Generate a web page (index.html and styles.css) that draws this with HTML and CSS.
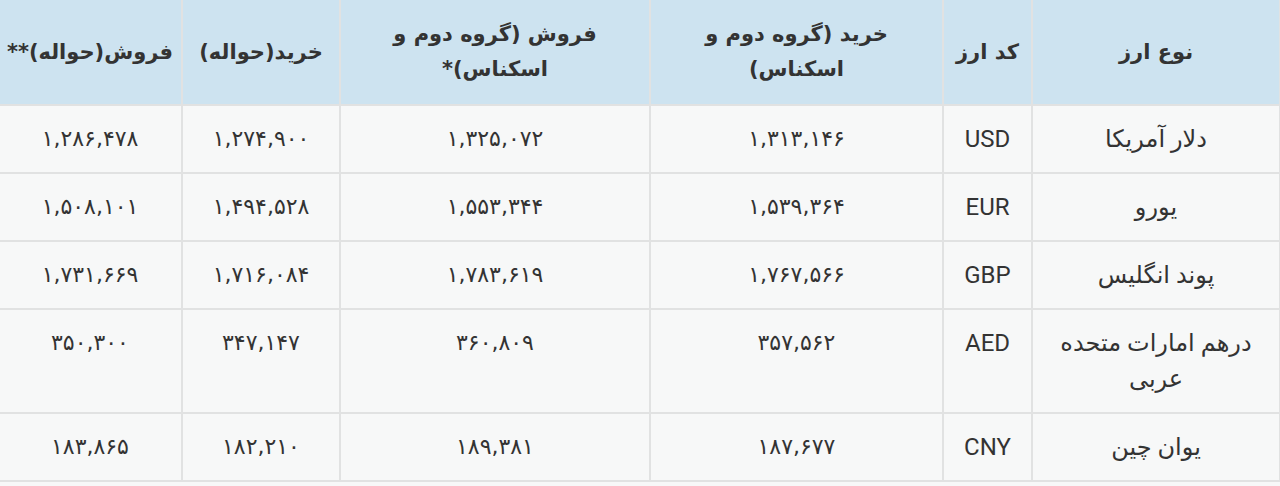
FILE: index.html
```html
<!DOCTYPE html>
<html lang="fa" dir="rtl">
<head>
<meta charset="utf-8">
<link rel="stylesheet" href="styles.css">
</head>
<body>
<table class="rates">
  <colgroup>
    <col class="c-name"><col class="c-code"><col class="c-buy"><col class="c-sell"><col class="c-hbuy"><col class="c-hsell">
  </colgroup>
  <thead>
    <tr>
      <th>نوع ارز</th>
      <th class="h-narrow">کد ارز</th>
      <th class="h-wide">خرید (گروه دوم و اسکناس)</th>
      <th class="h-wide">فروش (گروه دوم و اسکناس)*</th>
      <th class="h-narrow">خرید(حواله)</th>
      <th class="h-narrow">فروش(حواله)**</th>
    </tr>
  </thead>
  <tbody>
    <tr><td class="name">دلار آمریکا</td><td class="code">USD</td><td>۱,۳۱۳,۱۴۶</td><td>۱,۳۲۵,۰۷۲</td><td>۱,۲۷۴,۹۰۰</td><td>۱,۲۸۶,۴۷۸</td></tr>
    <tr><td class="name">یورو</td><td class="code">EUR</td><td>۱,۵۳۹,۳۶۴</td><td>۱,۵۵۳,۳۴۴</td><td>۱,۴۹۴,۵۲۸</td><td>۱,۵۰۸,۱۰۱</td></tr>
    <tr><td class="name">پوند انگلیس</td><td class="code">GBP</td><td>۱,۷۶۷,۵۶۶</td><td>۱,۷۸۳,۶۱۹</td><td>۱,۷۱۶,۰۸۴</td><td>۱,۷۳۱,۶۶۹</td></tr>
    <tr><td class="name">درهم امارات متحده عربی</td><td class="code">AED</td><td>۳۵۷,۵۶۲</td><td>۳۶۰,۸۰۹</td><td>۳۴۷,۱۴۷</td><td>۳۵۰,۳۰۰</td></tr>
    <tr><td class="name">یوان چین</td><td class="code">CNY</td><td>۱۸۷,۶۷۷</td><td>۱۸۹,۳۸۱</td><td>۱۸۲,۲۱۰</td><td>۱۸۳,۸۶۵</td></tr>
  </tbody>
</table>
</body>
</html>
```
FILE: styles.css
```css
html, body {
  margin: 0;
  padding: 0;
  background: #f7f8f8;
}
body {
  width: 1280px;
  height: 486px;
  overflow: hidden;
  font-family: "DejaVu Sans", sans-serif;
  color: #333;
}
.rates {
  width: 1282px;
  margin-right: -1px;
  border-collapse: collapse;
  table-layout: fixed;
}
.c-name { width: 248px; }
.c-code { width: 89px; }
.c-buy { width: 293px; }
.c-sell { width: 310px; }
.c-hbuy { width: 158px; }
.c-hsell { width: 184px; }
.rates th,
.rates td {
  border: 2px solid #e1e2e2;
  text-align: center;
}
.rates th {
  background: #cde3f0;
  border-top: none;
  height: 104px;
  padding: 0 20px;
  font-size: 21px;
  font-weight: bold;
  line-height: 35px;
  vertical-align: middle;
}
.rates th.h-narrow {
  padding: 0 4px;
  white-space: nowrap;
}
.rates th.h-wide {
  padding: 0 30px;
}
.rates td {
  background: #f7f8f8;
  padding: 15px 20px;
  font-size: 22px;
  line-height: 36px;
  vertical-align: top;
}
.rates td.name {
  font-family: Roboto, "DejaVu Sans", sans-serif;
  font-size: 24px;
  line-height: 36px;
  padding: 15px 12px;
}
.rates td.code {
  font-family: Roboto, sans-serif;
  font-size: 24px;
  line-height: 36px;
  padding: 15px 4px;
}
```
